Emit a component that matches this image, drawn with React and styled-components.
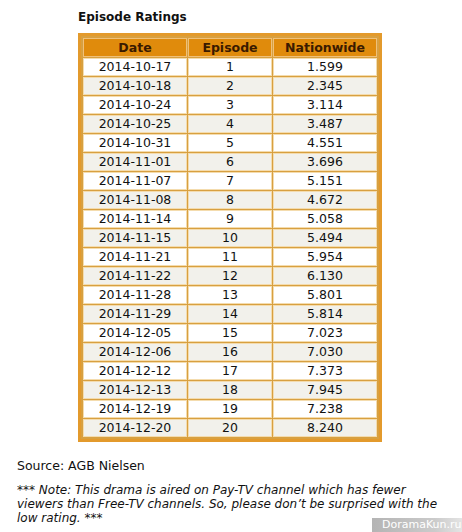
import React from "react";
import styled, { createGlobalStyle } from "styled-components";

const GlobalStyle = createGlobalStyle`
  body {
    margin: 0;
    background: #ffffff;
    font-family: "DejaVu Sans", Verdana, sans-serif;
    color: #222;
  }
`;

const ratings = [
  ["2014-10-17", 1, "1.599"],
  ["2014-10-18", 2, "2.345"],
  ["2014-10-24", 3, "3.114"],
  ["2014-10-25", 4, "3.487"],
  ["2014-10-31", 5, "4.551"],
  ["2014-11-01", 6, "3.696"],
  ["2014-11-07", 7, "5.151"],
  ["2014-11-08", 8, "4.672"],
  ["2014-11-14", 9, "5.058"],
  ["2014-11-15", 10, "5.494"],
  ["2014-11-21", 11, "5.954"],
  ["2014-11-22", 12, "6.130"],
  ["2014-11-28", 13, "5.801"],
  ["2014-11-29", 14, "5.814"],
  ["2014-12-05", 15, "7.023"],
  ["2014-12-06", 16, "7.030"],
  ["2014-12-12", 17, "7.373"],
  ["2014-12-13", 18, "7.945"],
  ["2014-12-19", 19, "7.238"],
  ["2014-12-20", 20, "8.240"],
];

const App = () => {
  return (
    <Page>
      <GlobalStyle />
      <Title>Episode Ratings</Title>
      <Table>
        <thead>
          <tr>
            <Head $w={102}>Date</Head>
            <Head $w={82}>Episode</Head>
            <Head $w={102}>Nationwide</Head>
          </tr>
        </thead>
        <tbody>
          {ratings.map(([date, ep, rate], i) => (
            <Row key={date} $odd={i % 2 === 1}>
              <Cell>{date}</Cell>
              <Cell>{ep}</Cell>
              <Cell>{rate}</Cell>
            </Row>
          ))}
        </tbody>
      </Table>
      <Source>Source: AGB Nielsen</Source>
      <Note>
        *** Note: This drama is aired on Pay-TV channel which has fewer
        viewers than Free-TV channels. So, please don’t be surprised with the
        low rating. ***
      </Note>
      <Watermark>DoramaKun.ru</Watermark>
    </Page>
  );
};

export default App;

const Page = styled.div`
  position: relative;
  width: 462px;
  height: 532px;
  padding: 9px 0 0 17px;
  box-sizing: border-box;
  overflow: hidden;
`;

const Title = styled.div`
  margin-left: 61px;
  font-size: 12px;
  font-weight: bold;
  color: #111;
  line-height: 16px;
`;

const Table = styled.table`
  margin: 8px 0 0 61px;
  border: 3px solid #e39a2c;
  background: #d8a040;
  border-collapse: separate;
  border-spacing: 1px;
  padding: 1px;
  font-size: 12.5px;
`;

const Head = styled.th`
  width: ${(p) => p.$w}px;
  height: 17px;
  padding: 0;
  background: #e08b0c;
  border: 1px solid #efc079;
  color: #3a1a00;
  font-weight: bold;
  font-size: 12.5px;
  text-align: center;
`;

const Row = styled.tr`
  background: ${(p) => (p.$odd ? "#f2f1eb" : "#ffffff")};
`;

const Cell = styled.td`
  height: 16px;
  padding: 0;
  border: 1px solid #f4dcae;
  text-align: center;
  color: #111;
  line-height: 16px;
`;

const Source = styled.div`
  margin-top: 16px;
  font-size: 12.5px;
  color: #111;
`;

const Note = styled.div`
  margin-top: 10px;
  width: 426px;
  font-size: 12px;
  font-style: italic;
  line-height: 14px;
  color: #111;
`;

const Watermark = styled.div`
  position: absolute;
  right: 0;
  bottom: 0;
  width: 90px;
  height: 14px;
  background: linear-gradient(to right, #b4b4b4, #cbcbcb 70%, #e4e4e4);
  color: #fff;
  font-size: 11px;
  line-height: 14px;
  padding-left: 10px;
  box-sizing: border-box;
  font-family: "DejaVu Sans", sans-serif;
`;
